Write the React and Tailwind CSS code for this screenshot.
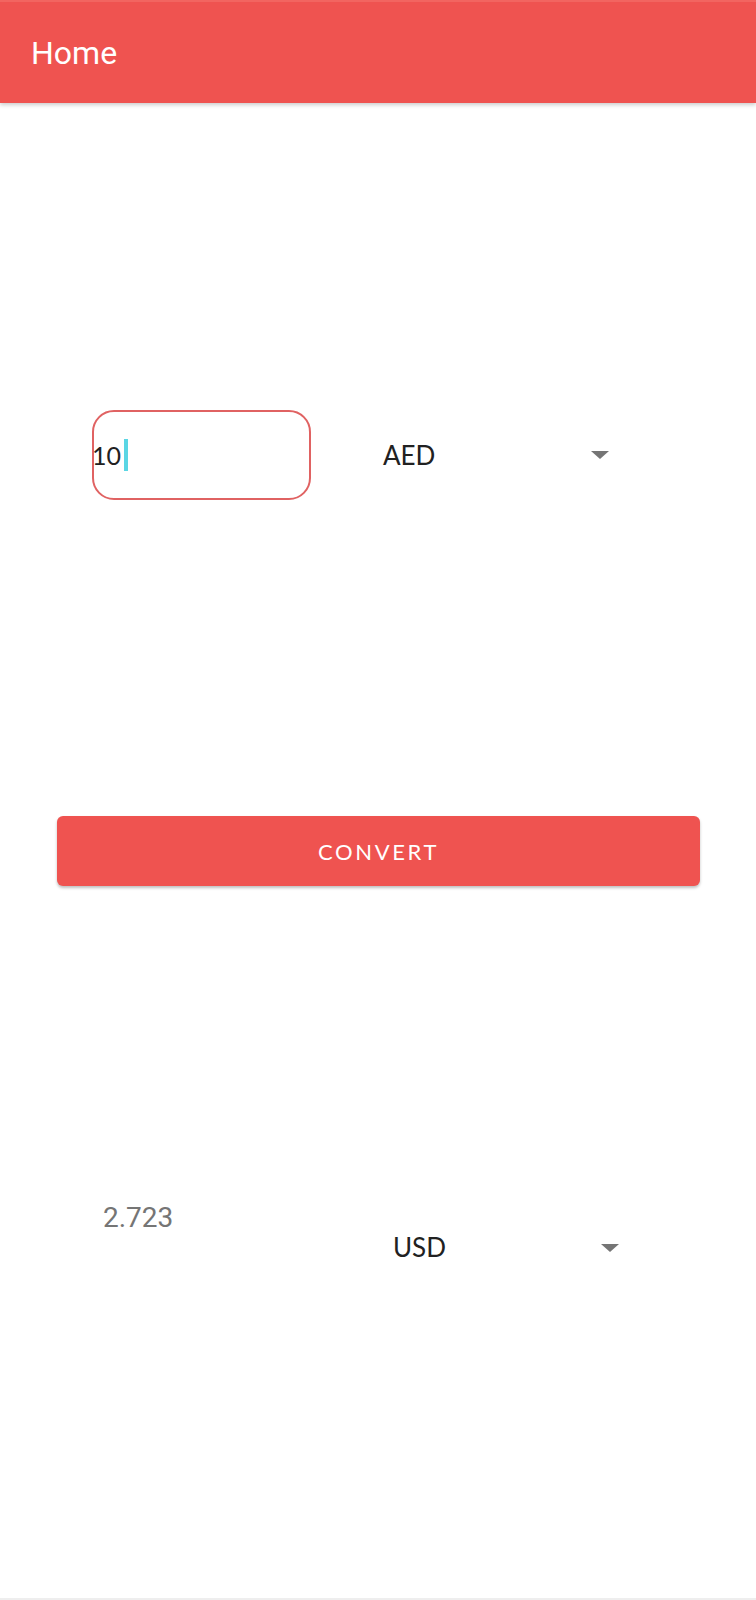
export default function App() {
  return (
    <div className="flex h-[1600px] flex-col bg-white" style={{ fontFamily: 'Lato, "Open Sans", sans-serif' }}>
      <header className="relative z-10 flex h-[103px] items-center border-t-2 border-[#f26560] bg-[#ef5350] pl-[31px] shadow-[0_2px_4px_rgba(0,0,0,0.2)]">
        <h1 className="text-[32px] text-white" style={{ fontFamily: 'Roboto, sans-serif' }}>
          Home
        </h1>
      </header>

      <div className="mt-[307px] flex items-center">
        <div className="ml-[92px] flex h-[90px] w-[219px] items-center rounded-[22px] border-2 border-[#e06262]">
          <span className="-ml-[2px] text-[25px] leading-none text-[#212121]">10</span>
          <span className="ml-[3px] h-[32px] w-[4px] bg-[#5ad6e4]" />
        </div>
        <div className="ml-[72px] flex w-[226px] items-center">
          <span className="text-[26px] text-[#212121]">AED</span>
          <span className="ml-auto h-0 w-0 border-x-[9px] border-t-[8px] border-x-transparent border-t-[#757575]" />
        </div>
      </div>

      <button
        type="button"
        className="mt-[316px] ml-[57px] h-[70px] w-[643px] rounded-[6px] bg-[#ef5350] text-[22px] tracking-[0.12em] text-white shadow-[0_2px_3px_rgba(0,0,0,0.25)]"
      >
        CONVERT
      </button>

      <div className="mt-[316px] flex items-start">
        <span className="ml-[103px] w-[68px] text-[28px] leading-[32px] text-[#757575]" style={{ fontFamily: 'Roboto, sans-serif' }}>
          2.723
        </span>
        <div className="ml-[222px] mt-[26px] flex w-[226px] items-center">
          <span className="text-[26px] text-[#212121]">USD</span>
          <span className="ml-auto h-0 w-0 border-x-[9px] border-t-[8px] border-x-transparent border-t-[#757575]" />
        </div>
      </div>

      <div className="mt-auto h-[2px] bg-[#eeeeee]" />
    </div>
  );
}
